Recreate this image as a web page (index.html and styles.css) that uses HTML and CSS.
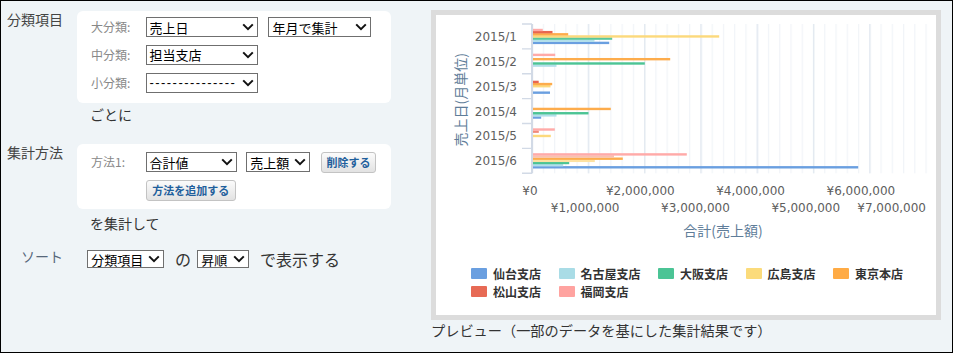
FILE: index.html
```html
<!DOCTYPE html>
<html lang="ja">
<head>
<meta charset="utf-8">
<title>集計</title>
<link rel="stylesheet" href="styles.css">
</head>
<body>
<div class="page">
  <div class="left">
    <div class="section s1">
      <div class="sec-label">分類項目</div>
      <div class="sec-body">
        <div class="box box1">
          <div class="frow">
            <span class="flab">大分類:</span>
            <div class="sel w112"><span>売上日</span><svg class="chev" width="12" height="8" viewBox="0 0 12 8"><path d="M1.2 1.4L6 6.2L10.8 1.4" fill="none" stroke="#111" stroke-width="2"/></svg></div>
            <div class="sel w102 gap10"><span>年月で集計</span><svg class="chev" width="12" height="8" viewBox="0 0 12 8"><path d="M1.2 1.4L6 6.2L10.8 1.4" fill="none" stroke="#111" stroke-width="2"/></svg></div>
          </div>
          <div class="frow">
            <span class="flab">中分類:</span>
            <div class="sel w112"><span>担当支店</span><svg class="chev" width="12" height="8" viewBox="0 0 12 8"><path d="M1.2 1.4L6 6.2L10.8 1.4" fill="none" stroke="#111" stroke-width="2"/></svg></div>
          </div>
          <div class="frow">
            <span class="flab">小分類:</span>
            <div class="sel w112"><span class="dash">---------------</span><svg class="chev" width="12" height="8" viewBox="0 0 12 8"><path d="M1.2 1.4L6 6.2L10.8 1.4" fill="none" stroke="#111" stroke-width="2"/></svg></div>
          </div>
        </div>
        <div class="after a1">ごとに</div>
      </div>
    </div>

    <div class="section s2">
      <div class="sec-label">集計方法</div>
      <div class="sec-body">
        <div class="box box2">
          <div class="frow">
            <span class="flab">方法1:</span>
            <div class="sel w91"><span>合計値</span><svg class="chev" width="12" height="8" viewBox="0 0 12 8"><path d="M1.2 1.4L6 6.2L10.8 1.4" fill="none" stroke="#111" stroke-width="2"/></svg></div>
            <div class="sel w64 gap9"><span>売上額</span><svg class="chev" width="12" height="8" viewBox="0 0 12 8"><path d="M1.2 1.4L6 6.2L10.8 1.4" fill="none" stroke="#111" stroke-width="2"/></svg></div>
            <div class="btn btn-del">削除する</div>
          </div>
          <div class="frow">
            <div class="btn btn-add">方法を追加する</div>
          </div>
        </div>
        <div class="after a2">を集計して</div>
      </div>
    </div>

    <div class="section s3">
      <div class="sec-label sort-label">ソート</div>
      <div class="sort">
        <div class="sel w77"><span>分類項目</span><svg class="chev" width="12" height="8" viewBox="0 0 12 8"><path d="M1.2 1.4L6 6.2L10.8 1.4" fill="none" stroke="#111" stroke-width="2"/></svg></div>
        <span class="stxt no">の</span>
        <div class="sel w51"><span>昇順</span><svg class="chev" width="12" height="8" viewBox="0 0 12 8"><path d="M1.2 1.4L6 6.2L10.8 1.4" fill="none" stroke="#111" stroke-width="2"/></svg></div>
        <span class="stxt disp">で表示する</span>
      </div>
    </div>
  </div>

  <div class="right">
    <div class="frame">
      <svg class="chart" width="500" height="250" viewBox="0 0 500 250">
        <defs>
          <pattern id="gmin" patternUnits="userSpaceOnUse" x="95.5" y="0" width="11.2571" height="10">
            <rect x="0" y="0" width="1.2" height="10" fill="#f1f4f8"/>
          </pattern>
          <pattern id="gmaj" patternUnits="userSpaceOnUse" x="95.5" y="0" width="56.2857" height="10">
            <rect x="0" y="0" width="1.4" height="10" fill="#e3e9f1"/>
          </pattern>
        </defs>
        <rect x="95.5" y="9" width="396" height="149.3" fill="url(#gmin)"/>
        <rect x="95.5" y="9" width="393" height="149.3" fill="url(#gmaj)"/>

        <g class="bars">
          <!-- 仙台支店 -->
          <rect x="96.5" y="26.7" width="76.7" height="2.4" fill="#6a9fe0"/>
          <rect x="96.5" y="76.46" width="17.5" height="2.4" fill="#6a9fe0"/>
          <rect x="96.5" y="101.34" width="8.7" height="2.4" fill="#6a9fe0"/>
          <rect x="96.5" y="151.1" width="325.7" height="2.4" fill="#6a9fe0"/>
          <!-- 名古屋支店 -->
          <rect x="96.5" y="24.55" width="62" height="2.4" fill="#b2dfea"/>
          <rect x="96.5" y="49.43" width="24" height="2.4" fill="#b2dfea"/>
          <rect x="96.5" y="99.19" width="24" height="2.4" fill="#b2dfea"/>
          <rect x="96.5" y="148.95" width="30.7" height="2.4" fill="#b2dfea"/>
          <!-- 大阪支店 -->
          <rect x="96.5" y="22.4" width="79.7" height="2.4" fill="#59c79c"/>
          <rect x="96.5" y="47.28" width="112.3" height="2.4" fill="#4cc495"/>
          <rect x="96.5" y="97.04" width="56" height="2.4" fill="#4cc495"/>
          <rect x="96.5" y="146.8" width="36.7" height="2.4" fill="#4cc495"/>
          <!-- 広島支店 -->
          <rect x="96.5" y="20.25" width="186.7" height="2.4" fill="#fcd97c"/>
          <rect x="96.5" y="70.01" width="18" height="2.4" fill="#fcd97c"/>
          <rect x="96.5" y="119.77" width="18.3" height="2.4" fill="#fcd97c"/>
          <rect x="96.5" y="144.65" width="62.3" height="2.4" fill="#fde2a2"/>
          <!-- 東京本店 -->
          <rect x="96.5" y="18.1" width="35.7" height="2.4" fill="#fdac4c"/>
          <rect x="96.5" y="42.98" width="137.7" height="2.4" fill="#fdac4c"/>
          <rect x="96.5" y="67.86" width="19.7" height="2.4" fill="#fdac4c"/>
          <rect x="96.5" y="92.74" width="78.3" height="2.4" fill="#fdac4c"/>
          <rect x="96.5" y="142.5" width="90.3" height="2.4" fill="#fdac4c"/>
          <!-- 松山支店 -->
          <rect x="96.5" y="15.95" width="20" height="2.4" fill="#e8664f"/>
          <rect x="96.5" y="65.71" width="6.2" height="2.4" fill="#e8664f"/>
          <rect x="96.5" y="115.47" width="6.3" height="2.4" fill="#f08a78"/>
          <rect x="96.5" y="140.35" width="81.5" height="2.4" fill="#f8c2b0"/>
          <!-- 福岡支店 -->
          <rect x="96.5" y="13.8" width="10.3" height="2.4" fill="#ffaaa8"/>
          <rect x="96.5" y="38.68" width="22.7" height="2.4" fill="#ffaaa8"/>
          <rect x="96.5" y="113.32" width="22.3" height="2.4" fill="#ffaaa8"/>
          <rect x="96.5" y="138.2" width="154.3" height="2.4" fill="#ffaaa8"/>
        </g>

        <line x1="96" y1="9" x2="96" y2="158.3" stroke="#d2dae6" stroke-width="2"/>
        <path d="M86 9H96M86 33.88H96M86 58.76H96M86 83.64H96M86 108.52H96M86 133.4H96M86 158.3H96" stroke="#d2dae6" stroke-width="1.4" fill="none"/>

        <g class="ylab">
          <text x="81" y="25.8">2015/1</text>
          <text x="81" y="50.7">2015/2</text>
          <text x="81" y="75.6">2015/3</text>
          <text x="81" y="100.5">2015/4</text>
          <text x="81" y="125.4">2015/5</text>
          <text x="81" y="150.2">2015/6</text>
        </g>
        <g class="xlab">
          <text x="94" y="179.5">¥0</text>
          <text x="149.15" y="197">¥1,000,000</text>
          <text x="204.3" y="179.5">¥2,000,000</text>
          <text x="259.45" y="197">¥3,000,000</text>
          <text x="314.6" y="179.5">¥4,000,000</text>
          <text x="369.75" y="197">¥5,000,000</text>
          <text x="424.9" y="179.5">¥6,000,000</text>
          <text x="490" y="197" class="end">¥7,000,000</text>
        </g>
        <text class="atitle" x="287" y="220.5">合計(売上額)</text>
        <text class="atitle" transform="translate(30 84.7) rotate(-90)">売上日(月単位)</text>
      </svg>
      <div class="legend">
        <div class="li"><span class="sw c-sendai"></span>仙台支店</div>
        <div class="li"><span class="sw c-nagoya"></span>名古屋支店</div>
        <div class="li"><span class="sw c-osaka"></span>大阪支店</div>
        <div class="li"><span class="sw c-hiroshima"></span>広島支店</div>
        <div class="li"><span class="sw c-tokyo"></span>東京本店</div>
        <div class="li"><span class="sw c-matsuyama"></span>松山支店</div>
        <div class="li"><span class="sw c-fukuoka"></span>福岡支店</div>
      </div>
    </div>
    <div class="caption">プレビュー（一部のデータを基にした集計結果です）</div>
  </div>
</div>
</body>
</html>
```

FILE: styles.css
```css
html, body {
  margin: 0;
  padding: 0;
}

body {
  font-family: "Noto Sans CJK JP", "Noto Sans", sans-serif;
  color: #333;
}

.page {
  width: 953px;
  height: 353px;
  box-sizing: border-box;
  border: 1px solid #000;
  background: #eff4f7;
  display: flex;
  overflow: hidden;
}

/* ---------- left column ---------- */
.left {
  width: 430px;
  flex: none;
  padding-top: 10px;
  box-sizing: border-box;
}

.section {
  display: flex;
  align-items: flex-start;
}

.s2 { margin-top: 20.3px; }
.s3 { margin-top: 15px; }

.sec-label {
  width: 57px;
  margin-left: 5px;
  margin-top: -2px;
  flex: none;
  text-align: right;
  font-size: 14px;
  line-height: 20px;
  color: #444;
}

.sort-label {
  color: #56677a;
}

.sec-body {
  margin-left: 14px;
}

.box {
  width: 314px;
  box-sizing: border-box;
  background: #fff;
  border-radius: 6px;
  display: flex;
  flex-direction: column;
}

.box1 {
  padding: 6.3px 0 10px 14px;
  gap: 7.7px;
}

.box2 {
  padding: 7.7px 0 8.3px 14px;
  gap: 7.3px;
}

.frow {
  display: flex;
  align-items: center;
  min-height: 20px;
}

.flab {
  width: 54.5px;
  flex: none;
  font-size: 12px;
  line-height: 20px;
  color: #888;
}

.sel {
  height: 20px;
  box-sizing: border-box;
  flex: none;
  border: 1px solid #6f6f6f;
  background: #fff;
  display: flex;
  align-items: center;
  justify-content: space-between;
  padding: 0 3px 0 3px;
  font-size: 13px;
  line-height: 1;
  color: #000;
  white-space: nowrap;
}

.chev {
  display: block;
  flex: none;
}

.dash {
  font-family: "Liberation Sans", sans-serif;
  letter-spacing: 1.45px;
}

.w112 { width: 112.4px; }
.w102 { width: 102.4px; }
.w91 { width: 91.4px; }
.w64 { width: 64px; }
.w77 { width: 77px; }
.w51 { width: 51.4px; }

.gap10 { margin-left: 10.6px; }
.gap9 { margin-left: 9.3px; }

.btn {
  height: 21px;
  box-sizing: border-box;
  flex: none;
  border: 1px solid #c3c3c3;
  border-radius: 3px;
  background: linear-gradient(#fbfbfb, #e2e2e2);
  color: #1f5f9c;
  font-weight: bold;
  font-size: 11px;
  display: flex;
  align-items: center;
  justify-content: center;
  white-space: nowrap;
}

.btn-del {
  width: 54.7px;
  margin-left: 11px;
}

.btn-add {
  width: 89.7px;
  margin-left: 55px;
}

.after {
  font-size: 14px;
  line-height: 20px;
  color: #333;
  padding-left: 13px;
}

.a1 { margin-top: 1px; }
.a2 { margin-top: 4px; }

.sort {
  display: flex;
  align-items: center;
  height: 22px;
  margin-left: 24.3px;
}

.sort .sel {
  height: 18px;
}

.stxt {
  font-size: 16px;
  line-height: 22px;
  color: #333;
}

.no {
  margin: 0 6.3px 0 10.7px;
}

.disp {
  margin-left: 11.3px;
}

/* ---------- right column / chart ---------- */
.right {
  padding-top: 9px;
  flex: none;
}

.frame {
  width: 510px;
  height: 310px;
  box-sizing: border-box;
  border: 5px solid #dcdcdc;
  background: #fff;
}

.chart {
  display: block;
}

.ylab text {
  font-family: "DejaVu Sans", sans-serif;
  font-size: 12px;
  fill: #5e5e5e;
  text-anchor: end;
}

.xlab text {
  font-family: "DejaVu Sans", sans-serif;
  font-size: 12px;
  fill: #5e5e5e;
  text-anchor: middle;
}

.xlab text.end {
  text-anchor: end;
}

.atitle {
  font-family: "Noto Sans CJK JP", sans-serif;
  font-size: 14px;
  fill: #5f7d99;
  text-anchor: middle;
}

.legend {
  margin-left: 35px;
  width: 440px;
  display: flex;
  flex-wrap: wrap;
  column-gap: 17.5px;
}

.li {
  height: 17.8px;
  display: flex;
  align-items: center;
  gap: 6px;
  font-size: 12px;
  font-weight: bold;
  color: #333;
  white-space: nowrap;
}

.sw {
  width: 16px;
  height: 11px;
  flex: none;
  border-radius: 1px;
}

.c-sendai { background: #6a9fe0; }
.c-nagoya { background: #a9dce6; }
.c-osaka { background: #4bc495; }
.c-hiroshima { background: #fbdb7b; }
.c-tokyo { background: #ffab45; }
.c-matsuyama { background: #e76a55; }
.c-fukuoka { background: #ffa3a0; }

.caption {
  font-size: 14.2px;
  line-height: 20px;
  color: #333;
  white-space: nowrap;
}
```
